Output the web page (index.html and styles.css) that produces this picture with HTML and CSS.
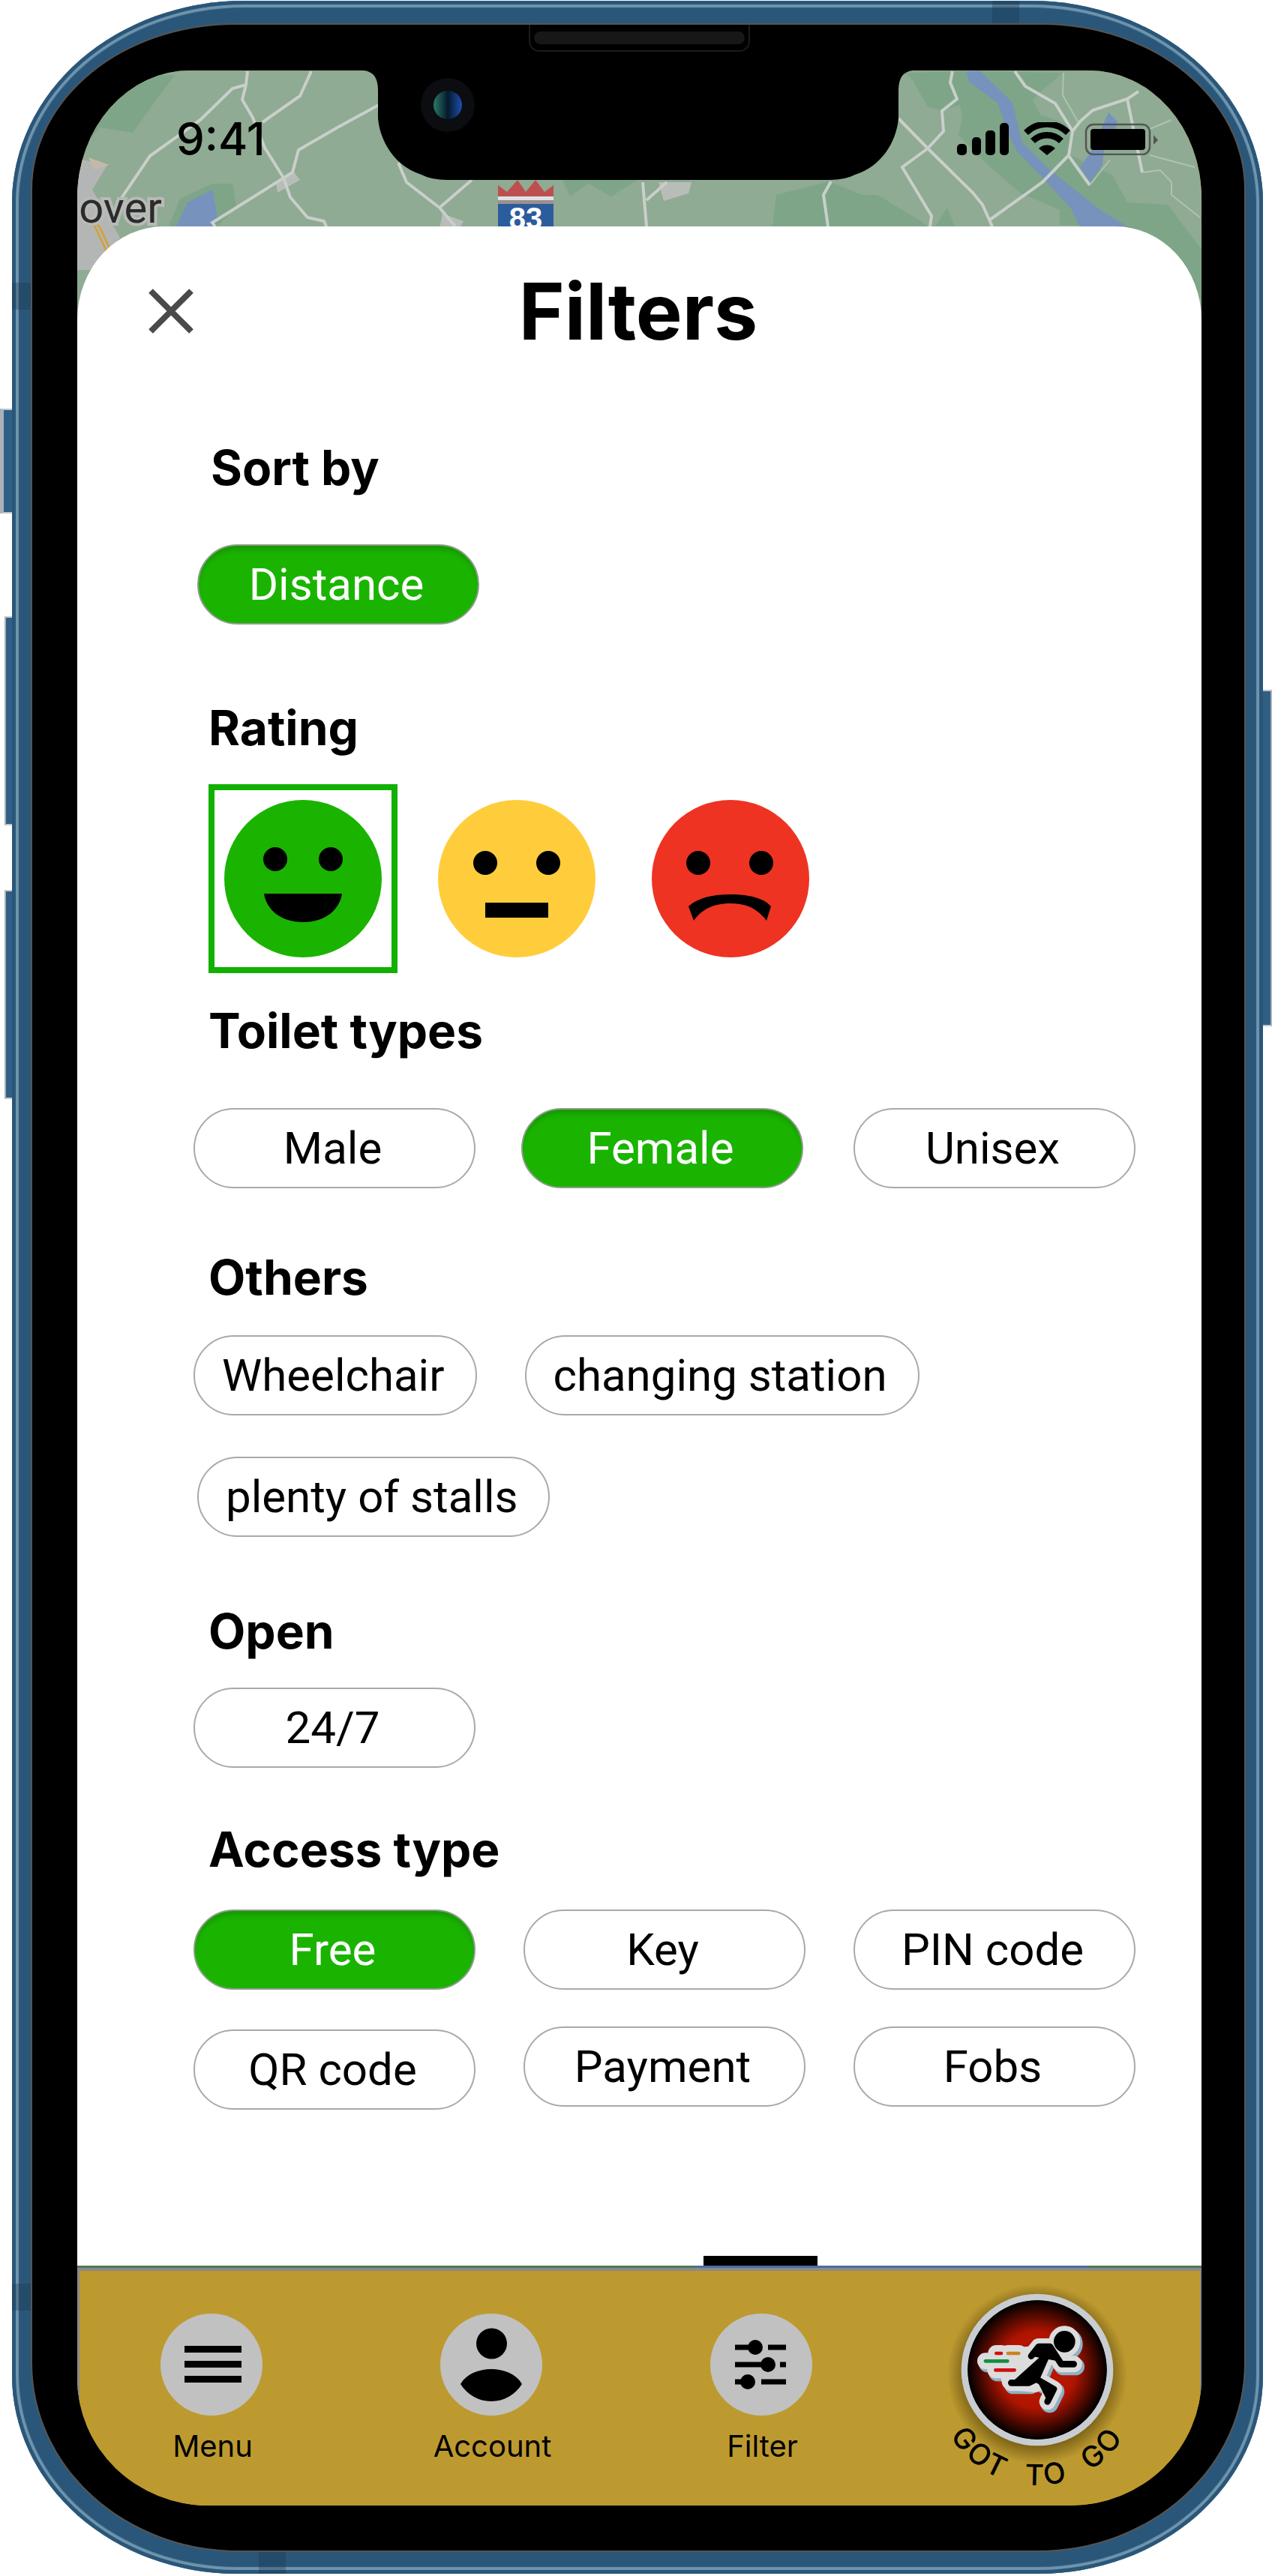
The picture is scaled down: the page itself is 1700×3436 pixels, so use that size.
FILE: index.html
```html
<!DOCTYPE html>
<html lang="en">
  <head>
    <meta charset="UTF-8" />
    <meta name="viewport" content="width=device-width, initial-scale=1.0" />
    <title>Filters</title>
    <link rel="stylesheet" href="styles.css">
  </head>
  <body>
    <div class="device">
      <span class="side-btn mute"></span>
      <span class="side-btn vol-up"></span>
      <span class="side-btn vol-down"></span>
      <span class="side-btn power"></span>
      <span class="antenna antenna-top"></span>
      <span class="antenna antenna-bottom"></span>
      <span class="antenna antenna-left-a"></span>
      <span class="antenna antenna-left-b"></span>

      <div class="bezel">
        <div class="speaker"><span></span></div>

        <div class="screen">
          <!-- map behind the sheet, plus the notch and camera -->
          <svg class="map" viewBox="103 94 1499 400" width="1499" height="400">
            <rect x="103" y="94" width="1499" height="400" fill="#8fab93" />
            <path class="patch" d="M233 100L213 127L177 177L133 170L110 200L103 100Z" />
            <path class="patch" d="M225 302L240 265L283 245L310 245L315 275L290 302Z" />
            <path class="patch" d="M1290 95L1417 97L1387 123L1377 133L1387 153L1427 167L1427 207L1483 233L1503 270L1557 273L1602 333V400L1483 302L1413 300L1413 280L1360 257L1317 220L1278 180L1283 157L1280 140L1257 147L1237 143L1217 107L1207 97Z" />
            <path class="patch" d="M1150 260L1170 260L1223 292L1237 302H1150Z" />
            <path class="patch" d="M1247 302L1263 277L1273 302Z" />
            <path class="patch" d="M1030 302L1035 260L1105 242L1150 260V302Z" />
            <path class="patch" d="M750 240H850L815 262L785 245L760 262Z" />
            <path class="town" d="M110 213L143 220L123 253L160 317L120 360H103V213Z" />
            <path class="beige" d="M118 210L146 220L125 226Z" />
            <path class="hwy" d="M107 283L127 303L143 337M113 283L133 303L148 335" />
            <path class="lake" d="M283 253L290 290L287 302H235L250 270Z" />
            <path class="lake" d="M1288 95L1293 110L1330 137L1345 180L1357 203L1390 237L1427 277L1440 302H1503L1467 280L1400 227L1363 190L1350 137L1307 95Z" />
            <path class="lake" d="M1478 150L1490 162L1488 170L1472 200L1470 220L1453 243L1440 223L1455 202Z" />
            <path class="blob" d="M368 243L390 227L400 240L370 257ZM878 243H922L918 258L885 268ZM590 285L618 295L610 310H585Z" />
            <path class="road" d="M330 95L328 113L323 133L337 157L353 197L378 237L387 263L410 290L432 295L435 302" />
            <path class="road" d="M328 113L310 118L267 160L200 208L160 267L150 300" />
            <path class="road" d="M415 95L400 128L350 163" />
            <path class="road" d="M505 140L450 170L398 200L390 230L283 297L287 302" />
            <path class="road" d="M531 217L542 243L586 277L629 240M586 277L607 302" />
            <path class="road" d="M857 243L862 302M889 243L862 267" />
            <path class="road" d="M1108 242L1098 260L1104 302" />
            <path class="road" d="M1198 158L1237 198L1297 257L1310 273L1323 302" />
            <path class="road" d="M1237 198L1203 223L1242 288L1240 302" />
            <path class="road" d="M1270 95L1267 110L1276 132L1256 148L1258 175L1237 198" />
            <path class="road" d="M1353 95L1367 115L1407 138L1430 175L1425 207L1390 243L1320 293" />
            <path class="road" d="M1518 122L1503 132L1457 147L1440 162L1430 175" />
            <path class="road" d="M1503 132L1523 230M1425 208L1453 247" />
            <path class="road thin" d="M1523 230L1547 227L1562 243L1562 260L1600 290M1453 247L1480 213M1418 97L1417 127L1437 162M1533 207L1593 223M1533 172L1562 160" />

            <path d="M664 262V247L676 256L690 240L701 256L714 240L726 256L738 247V262Z" fill="#bd4f50" />
            <rect x="664" y="262" width="74" height="5" fill="#dfe2e4" />
            <rect x="664" y="267" width="74" height="5" fill="#9d8f8f" />
            <rect x="664" y="272" width="74" height="40" fill="#2b5c9c" />
            <text class="shield-num" x="701" y="305">83</text>
            <text class="place" x="216" y="297">over</text>

            <path d="M485 94Q504 96 504 120V158C507 190 527 222 562 233Q575 240 596 240H1106Q1127 240 1140 233C1175 222 1195 190 1198 158V120Q1198 96 1217 94Z" fill="#000" />
            <circle cx="597" cy="140" r="36" fill="#0b0d10" />
            <circle cx="597" cy="140" r="19" fill="url(#lens)" />
            <defs>
              <linearGradient id="lens" x1="0" x2="1" y1="0" y2="0">
                <stop offset="0" stop-color="#2a7a68" />
                <stop offset="0.5" stop-color="#06182a" />
                <stop offset="1" stop-color="#1c4fb0" />
              </linearGradient>
            </defs>
          </svg>

          <div class="status">
            <span class="time">9:41</span>
            <svg class="status-icons" viewBox="1275 163 270 44" width="270" height="44">
              <rect x="1276" y="192" width="13" height="15" rx="5" />
              <rect x="1296" y="183" width="12" height="24" rx="5" />
              <rect x="1314" y="174" width="13" height="33" rx="5" />
              <rect x="1333" y="164" width="12" height="43" rx="5" />
              <path d="M1396 207L1385 198A16 16 0 0 1 1407 198Z" />
              <path class="wifi-arc" d="M1377 188A27 27 0 0 1 1415 188" />
              <path class="wifi-arc" d="M1368 177A40 40 0 0 1 1424 177" />
              <rect class="batt-case" x="1448" y="166" width="85" height="40" rx="10" />
              <rect x="1454" y="172" width="73" height="28" rx="4" />
              <path d="M1538 180L1544 187L1538 193Z" fill="#555" />
            </svg>
          </div>

          <div class="sheet">
            <header class="sheet-head">
              <svg class="close" viewBox="0 0 60 60" width="60" height="60">
                <path d="M3 3L57 57M57 3L3 57" />
              </svg>
              <h1>Filters</h1>
            </header>

            <section class="group group-sort">
              <h2>Sort by</h2>
              <div class="chips">
                <span class="chip on">Distance</span>
              </div>
            </section>

            <section class="group group-rating">
              <h2>Rating</h2>
              <div class="faces">
                <span class="face on">
                  <svg viewBox="0 0 210 210" width="210" height="210">
                    <circle cx="105" cy="105" r="105" fill="#1ab400" />
                    <circle cx="68" cy="79" r="16" />
                    <circle cx="142" cy="79" r="16" />
                    <path d="M53 125H157C154 146 135 163 105 163C75 163 56 146 53 125Z" />
                  </svg>
                </span>
                <span class="face">
                  <svg viewBox="0 0 210 210" width="210" height="210">
                    <circle cx="105" cy="105" r="105" fill="#ffcd3c" />
                    <circle cx="63" cy="84" r="16" />
                    <circle cx="147" cy="84" r="16" />
                    <rect x="63" y="137" width="84" height="20" />
                  </svg>
                </span>
                <span class="face">
                  <svg viewBox="0 0 210 210" width="210" height="210">
                    <circle cx="105" cy="105" r="105" fill="#ee3322" />
                    <circle cx="62" cy="84" r="16" />
                    <circle cx="146" cy="84" r="16" />
                    <path d="M49 142C62 130 82 126 105 126C128 126 148 130 159 142L153 161C140 144 125 138 105 138C85 138 68 144 56 161Z" />
                  </svg>
                </span>
              </div>
            </section>

            <section class="group group-toilet">
              <h2>Toilet types</h2>
              <div class="chips">
                <span class="chip">Male</span>
                <span class="chip on chip-female">Female</span>
                <span class="chip">Unisex</span>
              </div>
            </section>

            <section class="group group-others">
              <h2>Others</h2>
              <div class="chips">
                <span class="chip">Wheelchair</span>
                <span class="chip">changing station</span>
                <span class="chip chip-stalls">plenty of stalls</span>
              </div>
            </section>

            <section class="group group-open">
              <h2>Open</h2>
              <div class="chips">
                <span class="chip">24/7</span>
              </div>
            </section>

            <section class="group group-access">
              <h2>Access type</h2>
              <div class="chips">
                <span class="chip on">Free</span>
                <span class="chip">Key</span>
                <span class="chip">PIN code</span>
                <span class="chip chip-low">QR code</span>
                <span class="chip">Payment</span>
                <span class="chip">Fobs</span>
              </div>
            </section>

            <span class="sheet-tab"></span>
          </div>

          <div class="map-strip"></div>

          <nav class="nav">
            <div class="nav-item">
              <svg class="nav-icon" viewBox="0 0 136 136" width="136" height="136">
                <circle cx="68" cy="68" r="68" fill="#c1c1c1" />
                <rect x="32" y="43" width="76" height="9" />
                <rect x="32" y="63" width="76" height="9" />
                <rect x="32" y="83" width="76" height="9" />
              </svg>
              <span class="nav-label">Menu</span>
            </div>
            <div class="nav-item">
              <svg class="nav-icon" viewBox="0 0 136 136" width="136" height="136">
                <circle cx="68" cy="68" r="68" fill="#c1c1c1" />
                <circle cx="68.5" cy="40" r="20.5" />
                <path d="M27 94C35 80 52 74 68 74C84 74 101 80 109 94C100 108 85 117 68 117C51 117 36 108 27 94Z" />
              </svg>
              <span class="nav-label">Account</span>
            </div>
            <div class="nav-item">
              <svg class="nav-icon" viewBox="0 0 136 136" width="136" height="136">
                <circle cx="68" cy="68" r="68" fill="#c1c1c1" />
                <path class="slider" d="M33 45H60M77 45H101M33 68H77M93 68H101M33 91H50M68 91H101" />
                <circle cx="60" cy="45" r="10" />
                <circle cx="77" cy="68" r="10" />
                <circle cx="50" cy="91" r="10" />
              </svg>
              <span class="nav-label">Filter</span>
            </div>
            <div class="nav-item go">
              <svg viewBox="0 0 900 900" width="300" height="300">
                <defs>
                  <radialGradient id="disc">
                    <stop offset="0" stop-color="#c01a00" />
                    <stop offset="0.55" stop-color="#b01400" />
                    <stop offset="1" stop-color="#000" />
                  </radialGradient>
                  <radialGradient id="glow">
                    <stop offset="0.75" stop-color="#3a2a00" stop-opacity="0.6" />
                    <stop offset="1" stop-color="#3a2a00" stop-opacity="0" />
                  </radialGradient>
                  <g id="runner">
                    <circle cx="538" cy="280" r="30" />
                    <path d="M405 338L435 300H480L525 370H575M480 305L425 430L395 445H325M425 430L495 470L470 520" />
                  </g>
                  <g id="trail">
                    <path d="M265 327H285M312 327H355M222 358H310M262 394H338" />
                  </g>
                </defs>
                <circle cx="429" cy="410" r="360" fill="url(#glow)" />
                <circle cx="429" cy="393" r="291" fill="#000" stroke="#c9cdd1" stroke-width="26" />
                <circle cx="429" cy="393" r="278" fill="url(#disc)" />
                <g class="run-shadow" transform="translate(8 10)">
                  <use href="#runner" />
                  <use href="#trail" />
                </g>
                <g class="run-halo">
                  <use href="#runner" />
                  <use href="#trail" />
                  <path d="M300 340L430 330L420 450L320 440Z" />
                </g>
                <g class="run-body"><use href="#runner" /></g>
                <path class="trail-red" d="M265 327H285M262 394H338" />
                <path class="trail-orange" d="M312 327H355" />
                <path class="trail-green" d="M222 358H310" />
                <path id="go-arc" d="M24 450A405 405 0 0 0 834 450" fill="none" />
                <text class="go-text">
                  <textPath href="#go-arc" startOffset="50%">GOT TO GO</textPath>
                </text>
              </svg>
            </div>
          </nav>
        </div>
      </div>
    </div>
  </body>
</html>
```

FILE: styles.css
```css
:root {
  --frame: #2a5779;
  --frame-light: #6f94ad;
  --gold: #bd9a2f;
  --green: #1ab400;
  --chip-line: #a9a9a9;
}

* {
  box-sizing: border-box;
}

body {
  margin: 0;
  background: #fff;
  color: #000;
  font-family: Inter, "Liberation Sans", sans-serif;
}

/* phone shell */
.device {
  position: relative;
  width: 1668px;
  height: 3432px;
  margin: 1px 16px 0;
  padding: 32px 25px 31px 27px;
  border-radius: 310px 310px 300px 300px / 270px 270px 265px 265px;
  background: var(--frame);
  box-shadow: inset 0 0 0 5px var(--frame), inset 0 0 1px 9px var(--frame-light);
}

.side-btn {
  position: absolute;
  width: 12px;
  background: #2f5f85;
  border-left: 2px solid #aab2b8;
  border-top: 2px solid #c4c9cd;
  border-bottom: 2px solid #c4c9cd;
}

.mute {
  left: -16px;
  top: 544px;
  width: 16px;
  height: 140px;
  border-left-width: 5px;
}

.vol-up {
  left: -10px;
  top: 821px;
  width: 10px;
  height: 279px;
}

.vol-down {
  left: -10px;
  top: 1186px;
  width: 10px;
  height: 279px;
}

.power {
  right: -12px;
  top: 919px;
  height: 449px;
  border-left: 0;
  border-right: 2px solid #aab2b8;
}

.antenna {
  position: absolute;
  width: 36px;
  height: 32px;
  background: rgba(20, 50, 72, 0.3);
}

.antenna-top {
  left: 1307px;
  top: 0;
}

.antenna-bottom {
  left: 329px;
  bottom: 0;
}

.antenna-left-a,
.antenna-left-b {
  left: 0;
  width: 27px;
  height: 36px;
}

.antenna-left-a {
  top: 376px;
}

.antenna-left-b {
  top: 3045px;
}

.bezel {
  position: relative;
  height: 3369px;
  padding: 61px 57px 60px 60px;
  border-radius: 270px 270px 275px 275px / 220px 220px 250px 250px;
  background: #000;
  box-shadow: 0 0 0 2px #555;
}

.speaker {
  position: absolute;
  left: 662px;
  top: 0;
  width: 295px;
  height: 36px;
  padding: 9px 5px 0;
  border: 2px solid #1b1b1b;
  border-top: 0;
  border-radius: 0 0 14px 14px;
}

.speaker span {
  display: block;
  height: 17px;
  border-radius: 9px;
  background: #171717;
}

/* screen */
.screen {
  position: relative;
  display: flex;
  flex-direction: column;
  height: 3248px;
  overflow: hidden;
  border-radius: 150px 150px 175px 175px / 170px 170px 170px 170px;
  background: var(--gold);
}

.map {
  position: absolute;
  left: 0;
  top: 0;
}

.patch {
  fill: #7fa588;
}

.town {
  fill: #b4b6b5;
}

.beige {
  fill: #c4b9a8;
}

.hwy {
  fill: none;
  stroke: #d3a132;
  stroke-width: 2.5;
}

.lake {
  fill: #7692bd;
}

.blob {
  fill: #b9bdb9;
}

.road {
  fill: none;
  stroke: #c9cfca;
  stroke-width: 4;
}

.road.thin {
  stroke: #aec3b1;
  stroke-width: 2;
}

.shield-num {
  fill: #fff;
  font: 700 40px "Liberation Sans", sans-serif;
  text-anchor: middle;
}

.place {
  fill: #2b2b2b;
  stroke: #b8bab8;
  stroke-width: 8;
  paint-order: stroke;
  font: 400 58px Roboto, sans-serif;
  text-anchor: end;
}

.status {
  position: relative;
  display: flex;
  justify-content: space-between;
  flex: none;
  height: 208px;
  padding: 55px 57px 0 132px;
}

.time {
  font-size: 60px;
  font-weight: 500;
  line-height: 72px;
}

.status-icons {
  margin-top: 14px;
}

.wifi-arc {
  fill: none;
  stroke: #000;
  stroke-width: 8.5;
}

.batt-case {
  fill: none;
  stroke: #555;
  stroke-width: 2.5;
}

/* filter sheet */
.sheet {
  position: relative;
  flex: none;
  height: 2720px;
  padding: 53px 0 0 155px;
  border-radius: 115px 115px 0 0 / 125px 125px 0 0;
  background: #fff;
}

.sheet-head {
  display: grid;
  grid-template-columns: 1fr auto 1fr;
  align-items: center;
  margin-left: -155px;
}

.close {
  margin-left: 95px;
}

.close path {
  fill: none;
  stroke: #4a4a4a;
  stroke-width: 8;
}

h1 {
  margin: 0 3px 0 0;
  font-size: 104px;
  font-weight: 700;
  line-height: 120px;
}

h2 {
  margin: 0 0 65px 20px;
  font-size: 64px;
  font-weight: 700;
  line-height: 76px;
}

.group-sort {
  margin-top: 111px;
}

.group-sort h2 {
  margin-bottom: 64px;
  margin-left: 23px;
}

.group-sort .chip {
  margin-left: 5px;
}

.group-rating {
  margin-top: 100px;
}

.group-rating h2 {
  margin-bottom: 37px;
}

.group-toilet {
  margin-top: 39px;
}

.group-others {
  margin-top: 81px;
}

.group-others h2 {
  margin-bottom: 39px;
}

.group-open {
  margin-top: 88px;
}

.group-open h2 {
  margin-bottom: 37px;
}

.group-access {
  margin-top: 71px;
}

.group-access h2 {
  margin-bottom: 42px;
}

.chips {
  display: flex;
  flex-wrap: wrap;
  align-items: flex-start;
  gap: 55px 64px;
  width: 1270px;
}

.group-access .chips {
  row-gap: 49px;
}

.chip {
  display: flex;
  align-items: center;
  justify-content: center;
  min-width: 376px;
  height: 107px;
  padding: 0 41px 0 36px;
  border: 2px solid var(--chip-line);
  border-radius: 54px;
  font-family: Roboto, sans-serif;
  font-size: 60px;
}

.chip.on {
  border-color: #8f9c8c;
  background: var(--green);
  box-shadow: inset 0 9px 10px -5px rgba(0, 0, 0, 0.2);
  color: #fff;
}

.chip-female {
  margin: 0 3px 0 -3px;
}

.chip-stalls {
  margin-left: 5px;
}

.chip-low {
  margin-top: 4px;
  margin-bottom: -4px;
}

.faces {
  display: flex;
  gap: 33px;
  margin-left: 20px;
}

.face {
  display: block;
  width: 252px;
  height: 252px;
  padding: 13px;
  border: 8px solid transparent;
}

.face.on {
  border-color: #12b000;
}

.face svg {
  display: block;
}

.sheet-tab {
  position: absolute;
  left: 835px;
  bottom: 0;
  width: 152px;
  height: 13px;
  background: #000;
}

.map-strip {
  flex: none;
  height: 7px;
  background:
    linear-gradient(90deg, #4d7a55 0 55%, #4d6ca0 55% 90%, #4d7a55 90%) top / 100% 3px no-repeat,
    #8a8a8a;
}

/* bottom nav */
.nav {
  display: grid;
  grid-template-columns: 373px 360px 369px 1fr;
  flex: 1;
  padding: 57px 0 0 76px;
  border-left: 3px solid #8a8a8a;
  border-right: 2px solid #8a8a8a;
  background: var(--gold);
}

.nav-item {
  display: flex;
  flex-direction: column;
  align-items: center;
  width: 200px;
}

.nav-icon {
  display: block;
}

.nav-label {
  margin-top: 17px;
  padding-left: 3px;
  font-size: 40px;
  line-height: 48px;
}

.slider {
  fill: none;
  stroke: #000;
  stroke-width: 7;
}

.go {
  margin-top: -56px;
}

.go svg {
  display: block;
  flex: none;
  margin-left: 12px;
}

.run-shadow,
.run-halo,
.run-body {
  fill: none;
  stroke-linecap: round;
  stroke-linejoin: round;
}

.run-shadow {
  fill: #8fb0c4;
  stroke: #8fb0c4;
  stroke-width: 70;
}

.run-halo {
  fill: #dcdcdc;
  stroke: #dcdcdc;
  stroke-width: 66;
}

.run-body {
  fill: #000;
  stroke: #000;
  stroke-width: 26;
}

.run-body circle {
  stroke: none;
}

.trail-red,
.trail-orange,
.trail-green {
  fill: none;
  stroke-width: 14;
  stroke-linecap: round;
}

.trail-red {
  stroke: #d01010;
}

.trail-orange {
  stroke: #d08020;
}

.trail-green {
  stroke: #109040;
}

.go-text {
  font-size: 116px;
  font-weight: 500;
  letter-spacing: 10px;
  word-spacing: 50px;
  text-anchor: middle;
}
```
